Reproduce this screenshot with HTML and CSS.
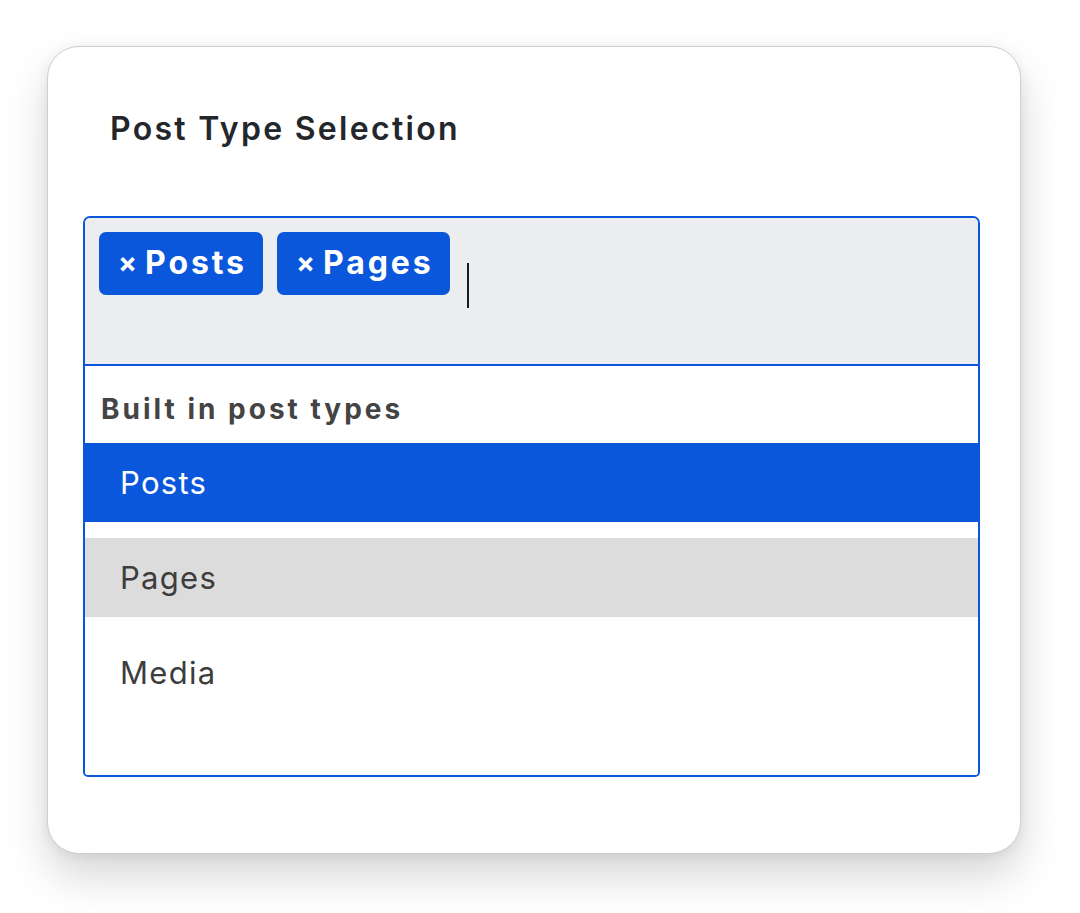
FILE: index.html
```html
<!DOCTYPE html>
<html>
<head>
<meta charset="utf-8">
<link rel="stylesheet" href="styles.css">
</head>
<body>
<div class="card">
  <h2 class="title">Post Type Selection</h2>
  <div class="select">
    <div class="control">
      <span class="tag"><span class="x">×</span>Posts</span>
      <span class="tag"><span class="x">×</span>Pages</span>
      <span class="caret"></span>
    </div>
    <div class="menu">
      <div class="group">Built in post types</div>
      <div class="option selected">Posts</div>
      <div class="option hover">Pages</div>
      <div class="option">Media</div>
    </div>
  </div>
</div>
</body>
</html>
```
FILE: styles.css
```css
html, body {
  margin: 0;
  padding: 0;
  background: #ffffff;
}
body {
  font-family: Inter, "Noto Sans", "Liberation Sans", sans-serif;
  padding: 46px 0 59px 47px;
}
.card {
  box-sizing: border-box;
  width: 974px;
  height: 808px;
  background: #ffffff;
  border: 1px solid #cfcfcf;
  border-radius: 32px;
  box-shadow: 0 22px 44px rgba(0, 0, 0, 0.16), 0 2px 12px rgba(0, 0, 0, 0.07);
  padding: 0 0 0 35px;
}
.title {
  margin: 0;
  padding: 62px 0 0 27px;
  height: 107px;
  box-sizing: border-box;
  font-size: 32px;
  line-height: 40px;
  font-weight: 600;
  color: #23262b;
  letter-spacing: 2.3px;
}
.select {
  box-sizing: border-box;
  width: 897px;
  height: 561px;
  margin-top: 62px;
  border: 2px solid #0b57dc;
  border-radius: 7px 7px 5px 5px;
  display: flex;
  flex-direction: column;
  overflow: hidden;
}
.control {
  box-sizing: border-box;
  height: 148px;
  background: #ecedef;
  border-bottom: 2px solid #0b57dc;
  padding: 14px 14px;
  display: flex;
  align-items: flex-start;
  gap: 14px;
}
.tag {
  display: inline-flex;
  align-items: center;
  height: 63px;
  box-sizing: border-box;
  padding: 0 16px 2px 19px;
  background: #0b57dc;
  color: #ffffff;
  border-radius: 7px;
  font-size: 32px;
  font-weight: 700;
  letter-spacing: 2.9px;
}
.tag .x {
  font-size: 28px;
  margin-right: 8px;
  letter-spacing: 0;
}
.caret {
  width: 2px;
  height: 45px;
  background: #1a1a1a;
  margin-top: 31px;
  margin-left: 3px;
}
.menu {
  flex: 1;
  background: #ffffff;
  display: flex;
  flex-direction: column;
  gap: 16px;
}
.group {
  height: 61px;
  box-sizing: border-box;
  padding: 25px 0 0 16px;
  font-size: 28px;
  line-height: 36px;
  font-weight: 700;
  color: #444444;
  letter-spacing: 3px;
}
.option {
  height: 79px;
  flex: none;
  box-sizing: border-box;
  display: flex;
  align-items: center;
  padding-left: 35px;
  font-size: 31px;
  color: #3d3d3d;
  letter-spacing: 1.3px;
}
.option.selected {
  background: #0b57dc;
  color: #ffffff;
}
.option.hover {
  background: #dcdcdc;
}
```
